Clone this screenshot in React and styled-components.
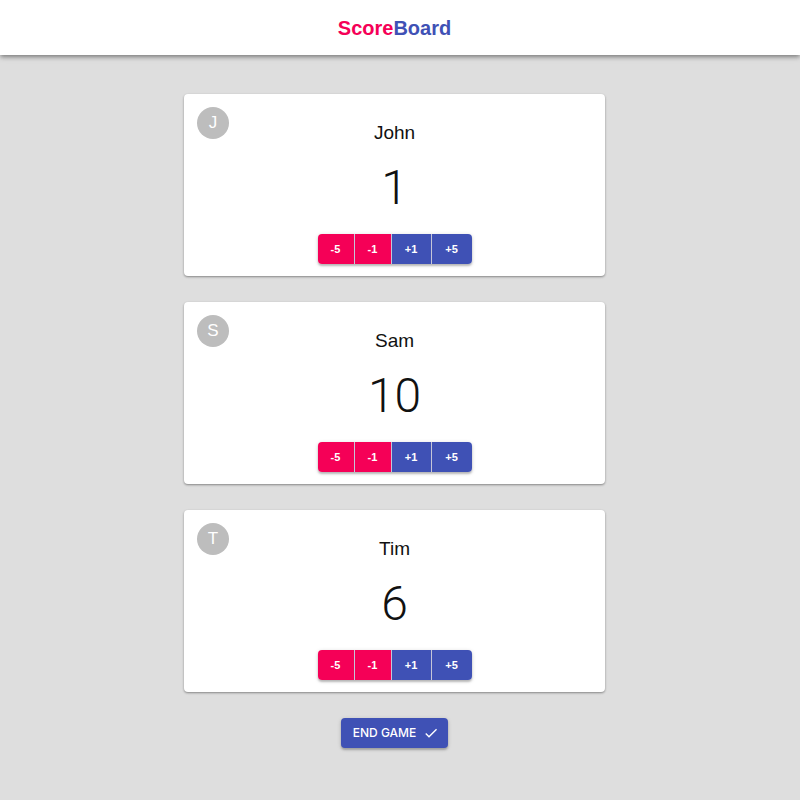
import React, { useState } from 'react';
import styled, { createGlobalStyle } from 'styled-components';

const RED = '#f50057';
const BLUE = '#3f51b5';

const GlobalStyle = createGlobalStyle`
  *, *::before, *::after { box-sizing: border-box; }
  body {
    margin: 0;
    background: #dedede;
    color: #111;
    font-family: "Liberation Sans", Helvetica, Arial, sans-serif;
  }
`;

const Page = styled.div`
  display: flex;
  flex-direction: column;
  min-height: 100vh;
`;

const Header = styled.header`
  display: flex;
  align-items: center;
  justify-content: center;
  height: 55px;
  padding-right: 11px;
  background: #fff;
  box-shadow: 0 2px 4px -1px rgba(0, 0, 0, 0.3), 0 3px 4px rgba(0, 0, 0, 0.14), 0 1px 8px rgba(0, 0, 0, 0.12);
`;

const Brand = styled.h1`
  margin: 0;
  font-size: 20px;
  line-height: 24px;
  color: ${RED};
`;

const BrandEnd = styled.span`
  color: ${BLUE};
`;

const Main = styled.main`
  display: flex;
  flex-direction: column;
  align-items: center;
  gap: 26px;
  padding: 39px 11px 50px 0;
`;

const Card = styled.section`
  position: relative;
  display: flex;
  flex-direction: column;
  align-items: center;
  width: 54%;
  min-width: 300px;
  max-width: 421px;
  padding: 26px 13px 12px;
  border-radius: 4px;
  background: #fff;
  box-shadow: 0 1px 2px rgba(0, 0, 0, 0.3), 0 1px 3px rgba(0, 0, 0, 0.12);
`;

const Avatar = styled.span`
  position: absolute;
  top: 13px;
  left: 13px;
  display: flex;
  align-items: center;
  justify-content: center;
  width: 32px;
  height: 32px;
  border-radius: 50%;
  background: #bdbdbd;
  color: #fff;
  font-size: 17px;
`;

const Name = styled.h2`
  margin: 0;
  font-size: 19px;
  font-weight: 400;
  line-height: 26px;
`;

const Score = styled.output`
  margin: 12px 0 16px;
  font-family: Roboto, "Liberation Sans", Helvetica, sans-serif;
  font-size: 48px;
  font-weight: 300;
  line-height: 60px;
`;

const ButtonGroup = styled.div`
  display: flex;
  border-radius: 4px;
  box-shadow: 0 2px 2px rgba(0, 0, 0, 0.2), 0 1px 4px rgba(0, 0, 0, 0.16);
`;

const ScoreButton = styled.button`
  min-width: ${({ $positive }) => ($positive ? '40px' : '37px')};
  height: 30px;
  padding: 0;
  border: 0;
  border-right: 1px solid #c5c5d8;
  background: ${({ $positive }) => ($positive ? BLUE : RED)};
  color: #fff;
  font: 700 11px/16px "Liberation Sans", Helvetica, sans-serif;
  cursor: pointer;

  &:first-child { border-radius: 4px 0 0 4px; }
  &:last-child { border-right: 0; border-radius: 0 4px 4px 0; }
`;

const EndButton = styled.button`
  display: flex;
  align-items: center;
  justify-content: center;
  gap: 7px;
  height: 30px;
  padding: 0 9px 0 12px;
  border: 0;
  border-radius: 4px;
  background: ${BLUE};
  color: #fff;
  font: 500 12px/20px Inter, "Liberation Sans", Helvetica, sans-serif;
  cursor: pointer;
  box-shadow: 0 2px 2px rgba(0, 0, 0, 0.2), 0 1px 4px rgba(0, 0, 0, 0.16);
`;

const CheckIcon = styled.svg`
  width: 16px;
  height: 16px;
  fill: currentColor;
`;

const STEPS = [-5, -1, 1, 5];

export default function App() {
  const [players, setPlayers] = useState([
    { name: 'John', score: 1 },
    { name: 'Sam', score: 10 },
    { name: 'Tim', score: 6 },
  ]);

  const change = (name, step) =>
    setPlayers((list) => list.map((p) => (p.name === name ? { ...p, score: p.score + step } : p)));

  return (
    <Page>
      <GlobalStyle />
      <Header>
        <Brand>Score<BrandEnd>Board</BrandEnd></Brand>
      </Header>
      <Main>
        {players.map(({ name, score }) => (
          <Card key={name}>
            <Avatar aria-hidden="true">{name[0]}</Avatar>
            <Name>{name}</Name>
            <Score aria-label={`${name} score`}>{score}</Score>
            <ButtonGroup role="group" aria-label={`Change score for ${name}`}>
              {STEPS.map((step) => (
                <ScoreButton key={step} type="button" $positive={step > 0} onClick={() => change(name, step)}>
                  {step > 0 ? `+${step}` : step}
                </ScoreButton>
              ))}
            </ButtonGroup>
          </Card>
        ))}
        <EndButton type="button">
          END GAME
          <CheckIcon viewBox="0 0 24 24" aria-hidden="true">
            <path d="M9 16.17 4.83 12l-1.42 1.41L9 19 21 7l-1.41-1.41z" />
          </CheckIcon>
        </EndButton>
      </Main>
    </Page>
  );
}
